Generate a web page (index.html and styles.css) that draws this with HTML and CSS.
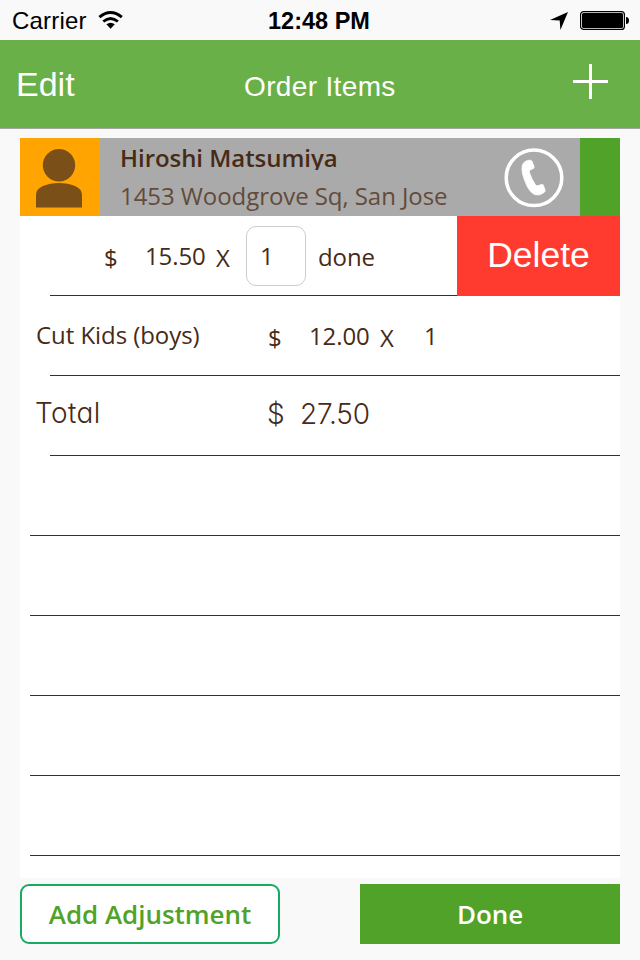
FILE: index.html
```html
<!DOCTYPE html>
<html lang="en">
<head>
<meta charset="utf-8">
<title>Order Items</title>
<link rel="stylesheet" href="styles.css">
</head>
<body>
<div class="status">
  <span class="carrier">Carrier</span>
  <svg class="wifi" width="26" height="20" viewBox="0 0 26 20">
    <g fill="none" stroke="#000" stroke-width="2.9">
      <path d="M1.400 7.200Q12.600-2.200 23.800 7.200"/>
      <path d="M5.300 11.500Q12.600 5.300 19.900 11.500"/>
    </g>
    <path d="M8.400 14.300Q12.600 11.300 16.800 14.300L12.600 18.700Z"/>
  </svg>
  <span class="time">12:48 PM</span>
  <svg class="location" width="18" height="18" viewBox="0 0 18 18"><path d="M18 0L10.4 18L9.7 8.5L0 8Z"/></svg>
  <svg class="battery" width="50" height="20" viewBox="0 0 50 20">
    <rect x=".6" y=".6" width="43.8" height="17.8" rx="3" fill="none" stroke="#000" stroke-width="1.2"/>
    <rect x="2" y="2" width="41" height="15" rx="1.5"/>
    <path d="M46 6Q49 6 49 9.5T46 13Z"/>
  </svg>
</div>
<header class="nav">
  <span class="edit">Edit</span>
  <span class="title">Order Items</span>
  <svg class="plus" width="35" height="35" viewBox="0 0 35 35"><path d="M16 0h3v16h16v3H19v16h-3V19H0v-3h16z" fill="#fff"/></svg>
</header>
<main class="sheet">
  <section class="customer">
    <div class="avatar">
      <svg width="80" height="78" viewBox="0 0 80 78" fill="#7b4f18">
        <circle cx="39" cy="27.3" r="16.2"/>
        <path d="M16 69.500V57Q16 51 23 48Q30 45 39 45T55 48Q62 51 62 57V69.500Z"/>
      </svg>
    </div>
    <div class="who">
      <div class="name">Hiroshi Matsumiya</div>
      <div class="address">1453 Woodgrove Sq, San Jose</div>
    </div>
    <svg class="phone" width="60" height="60" viewBox="0 0 60 60">
      <circle cx="30" cy="29.800" r="27.800" fill="none" stroke="#fff" stroke-width="3.5"/>
      <path fill="#fff" stroke="#fff" stroke-width=".8" stroke-linejoin="round" d="M22 13L25.500 12.200Q27.400 12 28.100 13.500L30 18.500Q30.500 20.300 28.800 20.800L26.500 21.800Q25 22.500 25.400 24.500Q27.500 31 31.500 37Q32.500 38.300 34.600 37.500L37.500 36.400Q39 36 39.500 37.500L41 42Q41.500 43.600 40 44.600Q35.500 48.300 30.500 46.500Q26.500 44.500 23.500 39Q20 32 18.600 26Q17.500 21 18.300 17.500Q19 14.500 22 13Z"/>
    </svg>
    <div class="flag"></div>
  </section>
  <div class="row swiped">
    <span class="cell dollar">$</span>
    <span class="cell price">15.50</span>
    <span class="cell times">X</span>
    <span class="qty">1</span>
    <span class="cell done-label">done</span>
    <span class="delete">Delete</span>
  </div>
  <div class="row item">
    <span class="cell label">Cut Kids (boys)</span>
    <span class="cell dollar">$</span>
    <span class="cell price">12.00</span>
    <span class="cell times">X</span>
    <span class="cell count">1</span>
  </div>
  <div class="row total">
    <span class="label">Total</span>
    <span class="dollar">$</span>
    <span class="price">27.50</span>
  </div>
  <div class="row blank"></div>
  <div class="row blank"></div>
  <div class="row blank"></div>
  <div class="row blank"></div>
  <div class="row blank"></div>
</main>
<footer class="actions">
  <span class="button add">Add Adjustment</span>
  <span class="button finish">Done</span>
</footer>
</body>
</html>
```
FILE: styles.css
```css
* { box-sizing: border-box; }
body {
  margin: 0;
  width: 640px;
  height: 960px;
  overflow: hidden;
  background: #f9f9f9;
  color: #472a17;
  font: 24px/34px "Open Sans", sans-serif;
}
span, div { white-space: nowrap; }
svg { display: block; flex: none; }

.status {
  display: flex;
  align-items: flex-start;
  height: 40px;
  padding-left: 12px;
  color: #000;
  font: 24px/28px "Liberation Sans", sans-serif;
}
.carrier { width: 86px; padding-top: 7px; letter-spacing: 0.2px; }
.wifi { margin-top: 10px; }
.time {
  flex: none;
  width: 282px;
  margin-left: 144px;
  padding-top: 7px;
  font-weight: 700;
  font-size: 23.5px;
}
.location { margin: 12px 12px 0 0; }
.battery { margin-top: 11px; }

.nav {
  display: flex;
  align-items: flex-start;
  height: 89px;
  padding-left: 16px;
  background: #69b048;
  border-bottom: 1px solid #a4a6a2;
  color: #fff;
  font-family: "Liberation Sans", sans-serif;
}
.edit { width: 228px; padding-top: 27px; font-size: 34px; }
.title { width: 329px; padding-top: 30px; font-size: 28px; letter-spacing: 0.35px; }
.plus { margin-top: 24px; }

.sheet {
  width: 600px;
  height: 740px;
  margin: 9px 20px 0;
  background: #fff;
}
.customer { display: flex; height: 78px; background: #aaa; }
.avatar { width: 80px; background: #ffa400; }
.who { width: 384px; padding: 3px 0 0 20px; }
.name { height: 29px; overflow: hidden; font-weight: 600; letter-spacing: -0.05px; }
.address { margin-top: 9px; color: #634a3a; letter-spacing: -0.07px; }
.phone { margin: 10px 16px 0 20px; }
.flag { width: 40px; background: #51a229; }

.row {
  display: flex;
  align-items: flex-start;
  height: 80px;
  background: linear-gradient(#472a17, #472a17) no-repeat 30px 79px / 570px 1px;
}
.blank { background-position: 10px 79px; background-size: 590px 1px; }

.swiped { padding-left: 84px; }
.swiped .dollar { width: 41px; padding-top: 25px; }
.swiped .price { width: 71px; padding-top: 23px; letter-spacing: -0.1px; }
.swiped .times { width: 30px; padding-top: 25px; }
.qty {
  width: 60px;
  height: 60px;
  margin-top: 10px;
  padding: 12px 0 0 13px;
  border: 1px solid #ccc;
  border-radius: 10px;
}
.done-label { width: 151px; padding: 24px 0 0 12px; letter-spacing: -0.1px; }
.delete {
  width: 163px;
  height: 80px;
  background: #ff3b30;
  color: #fff;
  font: 35.5px/79px "Liberation Sans", sans-serif;
  text-align: center;
}

.item { padding-left: 16px; }
.item .label { width: 232px; padding-top: 22px; letter-spacing: -0.06px; }
.item .dollar { width: 41px; padding-top: 25px; }
.item .price { width: 71px; padding-top: 23px; letter-spacing: -0.1px; }
.item .times { width: 44px; padding-top: 25px; }
.item .count { padding-top: 23px; }

.total {
  padding-left: 15px;
  font-family: Inter, sans-serif;
  font-size: 28px;
  font-weight: 300;
  font-feature-settings: "cv11";
}
.total .label { width: 232px; padding-top: 20px; letter-spacing: 0.4px; }
.total .dollar { width: 33px; padding-top: 21px; }
.total .price { padding-top: 21px; letter-spacing: -0.2px; }

.actions { display: flex; justify-content: space-between; margin: 6px 20px 0; }
.button {
  width: 260px;
  height: 60px;
  font-weight: 600;
  font-size: 26px;
  line-height: 60px;
  letter-spacing: -0.05px;
  text-align: center;
}
.add { border: 2px solid #18aa62; border-radius: 9px; background: #fff; color: #51a229; line-height: 57px; }
.finish { background: #51a229; color: #fff; }
```
